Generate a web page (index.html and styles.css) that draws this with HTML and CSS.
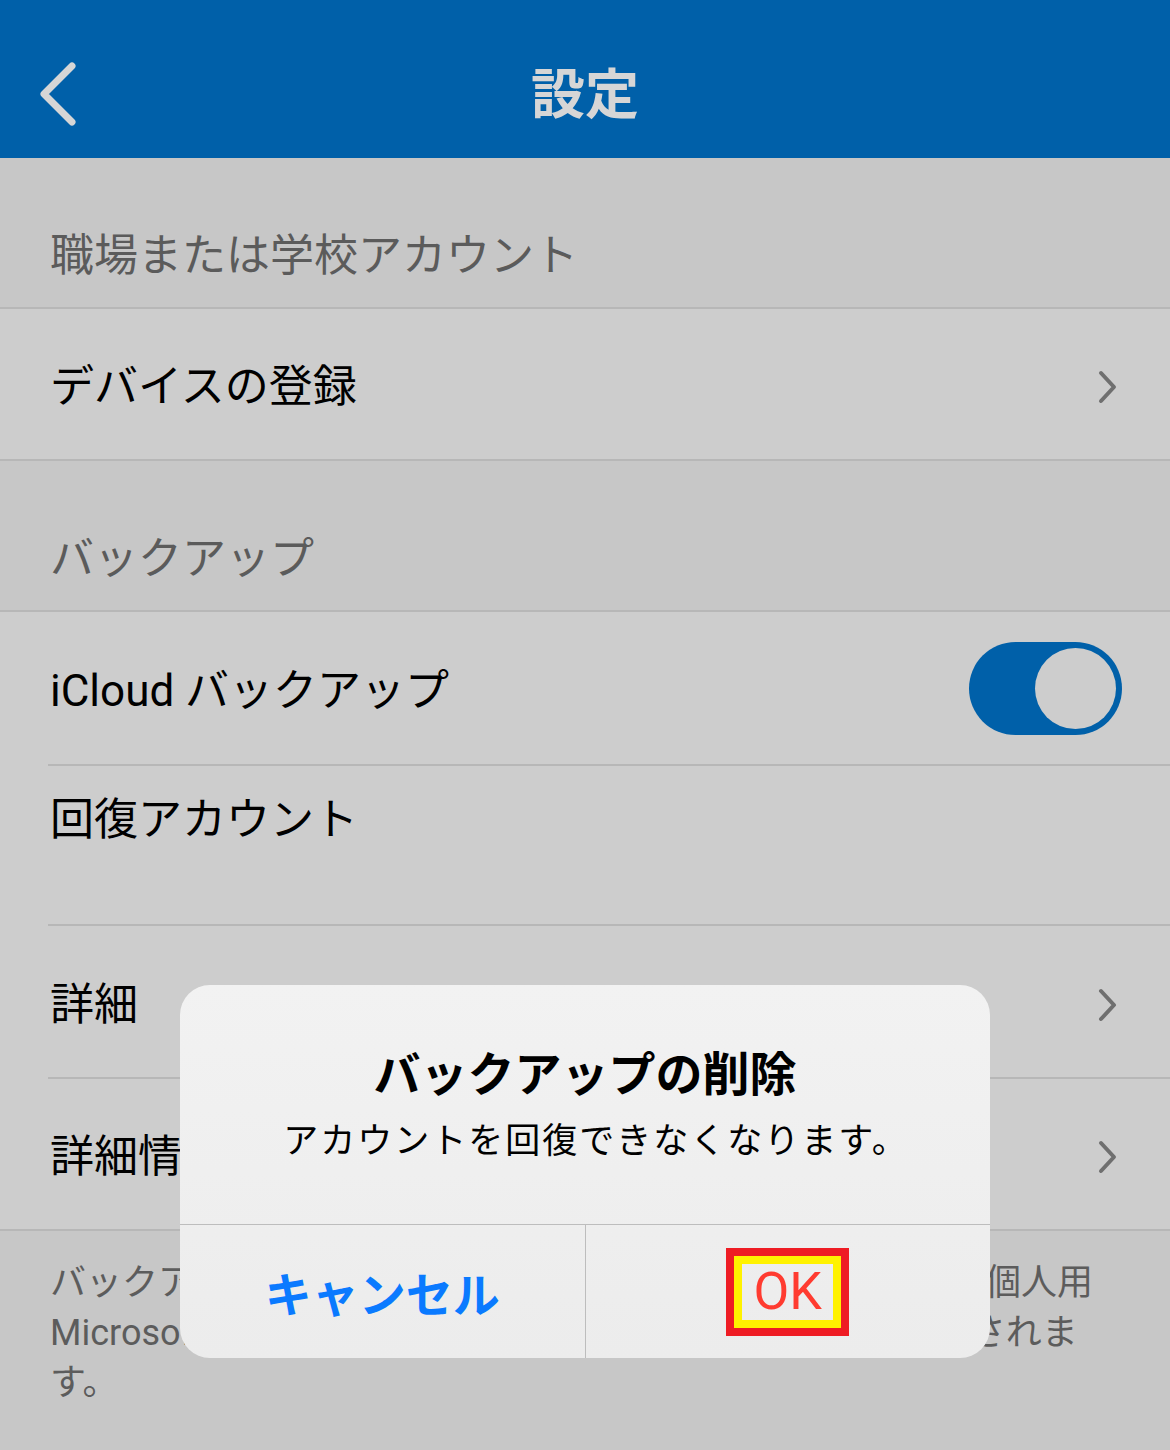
FILE: index.html
```html
<!DOCTYPE html>
<html lang="ja">
<head>
    <meta charset="UTF-8">
    <meta name="viewport" content="width=device-width, initial-scale=1.0">
    <title>設定</title>
    <link rel="stylesheet" href="styles.css">
</head>
<body>
    <header class="nav-bar">
        <a class="back-btn" href="#">
            <svg width="40" height="66" viewBox="0 0 40 66">
                <polyline points="34,5 6,33 34,61" fill="none" stroke="#d6d6d6" stroke-width="7" stroke-linecap="round" stroke-linejoin="round"/>
            </svg>
        </a>
        <h1>設定</h1>
        <span></span>
    </header>

    <div class="section-title">職場または学校アカウント</div>
    <div class="group">
        <div class="row full">
            <span class="label">デバイスの登録</span>
            <svg class="chevron" width="20" height="34" viewBox="0 0 20 34">
                <polyline points="3,3 16,17 3,31" fill="none" stroke="#6f6f6f" stroke-width="4" stroke-linecap="round" stroke-linejoin="round"/>
            </svg>
        </div>
    </div>

    <div class="section-title">バックアップ</div>
    <div class="group">
        <div class="row tall">
            <span class="label">iCloud バックアップ</span>
            <span class="switch on"><span class="knob"></span></span>
        </div>
        <div class="row top">
            <span class="label">回復アカウント</span>
        </div>
        <div class="row mid">
            <span class="label">詳細</span>
            <svg class="chevron" width="20" height="34" viewBox="0 0 20 34">
                <polyline points="3,3 16,17 3,31" fill="none" stroke="#6f6f6f" stroke-width="4" stroke-linecap="round" stroke-linejoin="round"/>
            </svg>
        </div>
        <div class="row">
            <span class="label">詳細情報</span>
            <svg class="chevron" width="20" height="34" viewBox="0 0 20 34">
                <polyline points="3,3 16,17 3,31" fill="none" stroke="#6f6f6f" stroke-width="4" stroke-linecap="round" stroke-linejoin="round"/>
            </svg>
        </div>
    </div>

    <p class="footer-note">バックアップを保存するには、回復アカウントとして必ず個人用 Microsoft アカウントがバックアップの回復と復元に使用されます。</p>

    <div class="alert">
        <div class="alert-body">
            <h2>バックアップの削除</h2>
            <p>アカウントを回復できなくなります。</p>
        </div>
        <div class="alert-actions">
            <button class="cancel">キャンセル</button>
            <button class="ok"><span class="ok-mark"><span class="ok-label">OK</span></span></button>
        </div>
    </div>
</body>
</html>
```

FILE: styles.css
```css
body {
    font-family: Roboto, "Noto Sans CJK JP", sans-serif;
    background-color: #c7c7c7;
    margin: 0;
    padding: 0;
    position: relative;
    min-height: 1450px;
}
.nav-bar {
    background: #0060a9;
    height: 158px;
    box-sizing: border-box;
    padding: 34px 0 0 0;
    display: grid;
    grid-template-columns: 1fr auto 1fr;
    align-items: center;
}
.back-btn {
    display: flex;
    padding-left: 38px;
    margin-top: -4px;
}
.nav-bar h1 {
    margin: 0;
    font-size: 54px;
    font-weight: bold;
    color: #d6d6d6;
    line-height: 64px;
}
.section-title {
    height: 149px;
    box-sizing: border-box;
    display: flex;
    align-items: flex-end;
    padding: 0 50px 25px 50px;
    font-size: 44px;
    line-height: 52px;
    color: #5b5b5b;
}
.group {
    background: #cdcdcd;
    border-top: 2px solid #b7b7b7;
    border-bottom: 2px solid #b7b7b7;
}
.row {
    display: flex;
    align-items: center;
    justify-content: space-between;
    margin-left: 48px;
    padding: 6px 48px 0 2px;
    box-sizing: border-box;
    height: 150px;
    border-bottom: 2px solid #b7b7b7;
    font-size: 44px;
    line-height: 52px;
    color: #000;
}
.row:last-child {
    border-bottom: none;
}
.row.full {
    margin-left: 0;
    padding-left: 50px;
}
.row.tall {
    height: 154px;
}
.row.mid {
    height: 153px;
}
.row.top {
    align-items: flex-start;
    height: 160px;
    padding-top: 28px;
}
.row .chevron {
    margin-right: 4px;
}
.switch {
    width: 153px;
    height: 93px;
    border-radius: 47px;
    background: #0060a9;
    display: flex;
    align-items: center;
    justify-content: flex-end;
    padding-right: 6px;
    box-sizing: border-box;
    margin-top: -6px;
}
.knob {
    width: 81px;
    height: 81px;
    border-radius: 50%;
    background: #cdcdcd;
}
.footer-note {
    margin: 0;
    padding: 27px 50px;
    font-size: 36px;
    line-height: 50px;
    color: #5c5c5c;
}
.alert {
    position: absolute;
    left: 180px;
    top: 985px;
    width: 810px;
    height: 373px;
    border-radius: 30px;
    background: linear-gradient(#f2f2f2, #ececec);
    overflow: hidden;
    display: flex;
    flex-direction: column;
}
.alert-body {
    height: 240px;
    box-sizing: border-box;
    padding-top: 61px;
    text-align: center;
    border-bottom: 1px solid #bdbdbd;
}
.alert-body h2 {
    margin: 0;
    font-size: 47px;
    line-height: 58px;
    font-weight: bold;
    color: #000;
}
.alert-body p {
    margin: 16px 0 0 0;
    padding-left: 22px;
    font-size: 35px;
    line-height: 44px;
    letter-spacing: 2px;
    color: #000;
}
.alert-actions {
    flex: 1;
    display: flex;
}
.alert-actions button {
    flex: 1;
    border: none;
    background: none;
    font-family: inherit;
    display: flex;
    align-items: center;
    justify-content: center;
    padding: 0;
}
.alert-actions .cancel {
    border-right: 1px solid #bdbdbd;
    font-size: 47px;
    font-weight: bold;
    color: #0a7aff;
}
.ok-mark {
    border: 8px solid #ee1c24;
}
.ok-label {
    display: block;
    border: 8px solid #fff200;
    width: 91px;
    height: 56px;
    line-height: 56px;
    text-align: center;
    font-size: 52px;
    color: #ff3b30;
}
```
